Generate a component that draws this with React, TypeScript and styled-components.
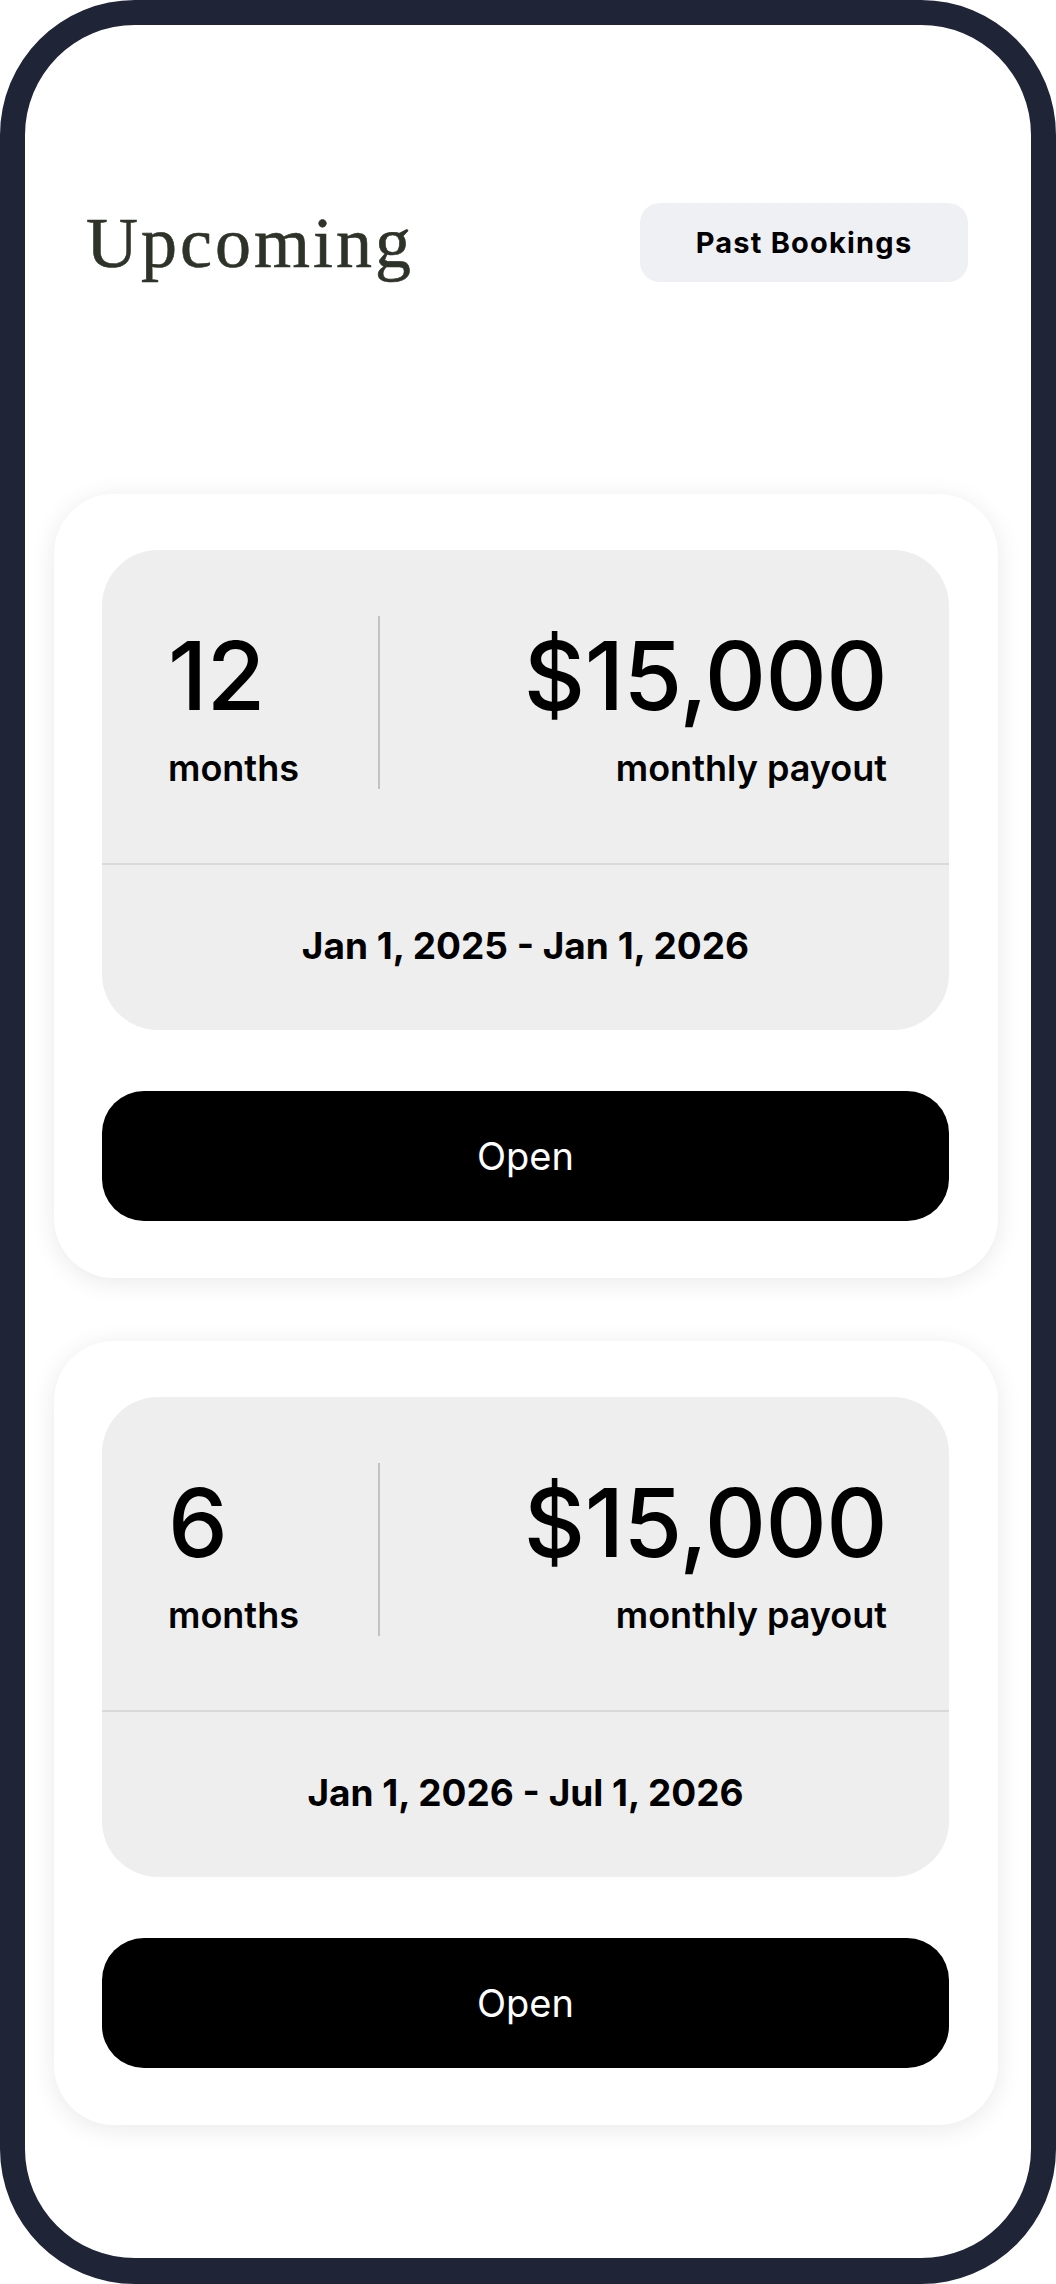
import styled, { createGlobalStyle } from 'styled-components';

const GlobalStyle = createGlobalStyle`
  html, body {
    margin: 0;
    padding: 0;
    background: #ffffff;
  }

  body {
    font-family: Inter, 'Noto Sans', sans-serif;
    color: #000000;
  }

  * {
    box-sizing: border-box;
  }
`;

type Booking = {
  id: number;
  months: number;
  payout: string;
  range: string;
};

const bookings: Booking[] = [
  { id: 1, months: 12, payout: '$15,000', range: 'Jan 1, 2025 - Jan 1, 2026' },
  { id: 2, months: 6, payout: '$15,000', range: 'Jan 1, 2026 - Jul 1, 2026' },
];

export default function App() {
  return (
    <>
      <GlobalStyle />
      <Phone>
        <Header>
          <Title>Upcoming</Title>
          <PastButton type='button'>Past Bookings</PastButton>
        </Header>
        <List>
          {bookings.map((booking) => (
            <Card key={booking.id}>
              <Summary>
                <Stats>
                  <Stat>
                    <Big>{booking.months}</Big>
                    <Label>months</Label>
                  </Stat>
                  <VDivider />
                  <Stat $right>
                    <Big>{booking.payout}</Big>
                    <Label>monthly payout</Label>
                  </Stat>
                </Stats>
                <Dates>{booking.range}</Dates>
              </Summary>
              <OpenButton type='button'>Open</OpenButton>
            </Card>
          ))}
        </List>
      </Phone>
    </>
  );
}

const Phone = styled.div`
  width: 1056px;
  height: 2284px;
  border: 25px solid #1f2437;
  border-bottom-width: 26px;
  border-radius: 135px;
  background: #ffffff;
  overflow: hidden;
  padding: 178px 0 0;
`;

const Header = styled.header`
  display: flex;
  align-items: center;
  justify-content: space-between;
  padding: 0 63px 0 61px;
`;

const Title = styled.h1`
  margin: 0;
  font-family: 'Liberation Serif', 'Times New Roman', serif;
  font-weight: 400;
  font-size: 72px;
  line-height: 1;
  letter-spacing: 3px;
  color: #2e3329;
  -webkit-text-stroke: 0.6px #2e3329;
`;

const PastButton = styled.button`
  width: 328px;
  height: 79px;
  border: 0;
  border-radius: 20px;
  background: #eff0f4;
  font-family: Inter, 'Noto Sans', sans-serif;
  font-weight: 700;
  font-size: 29px;
  letter-spacing: 1.2px;
  color: #000000;
  cursor: pointer;
`;

const List = styled.div`
  display: flex;
  flex-direction: column;
  gap: 63px;
  margin-top: 212px;
  padding: 0 33px 0 29px;
`;

const Card = styled.section`
  display: flex;
  flex-direction: column;
  gap: 61px;
  padding: 56px 49px 57px 48px;
  border-radius: 60px;
  background: #ffffff;
  box-shadow: 0 4px 26px rgba(0, 0, 0, 0.09);
`;

const Summary = styled.div`
  display: flex;
  flex-direction: column;
  border-radius: 56px;
  background: #eeeeee;
  overflow: hidden;
`;

const Stats = styled.div`
  height: 315px;
  display: flex;
  align-items: center;
  padding: 0 62px 0 66px;
  border-bottom: 2px solid #d9d9d9;
`;

const Stat = styled.div<{ $right?: boolean }>`
  display: flex;
  flex-direction: column;
  gap: 27px;
  align-items: ${(p) => (p.$right ? 'flex-end' : 'flex-start')};
  ${(p) => (p.$right ? 'flex: 1;' : 'width: 210px;')}
`;

const Big = styled.span`
  font-size: 95px;
  font-weight: 500;
  line-height: 1;
  letter-spacing: -0.6px;
`;

const Label = styled.span`
  font-size: 36px;
  font-weight: 600;
  line-height: 1;
`;

const VDivider = styled.div`
  width: 2px;
  height: 173px;
  margin-top: -8px;
  background: #c2c2c2;
`;

const Dates = styled.div`
  height: 165px;
  display: flex;
  align-items: center;
  justify-content: center;
  padding-bottom: 4px;
  font-size: 37px;
  font-weight: 700;
  line-height: 1;
`;

const OpenButton = styled.button`
  height: 130px;
  border: 0;
  border-radius: 42px;
  background: #000000;
  color: #ffffff;
  font-family: Inter, 'Noto Sans', sans-serif;
  font-size: 38px;
  font-weight: 400;
  cursor: pointer;
`;
